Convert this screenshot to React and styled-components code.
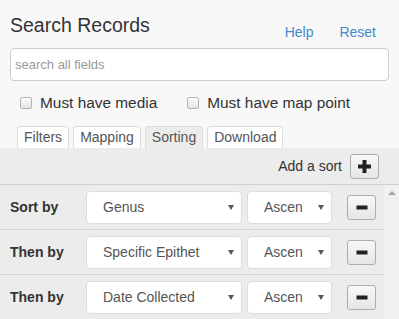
import React from 'react';
import styled, { createGlobalStyle } from 'styled-components';

const GlobalStyle = createGlobalStyle`
  html, body {
    margin: 0;
    overflow: hidden;
    background: #f8f8f8;
    font-family: "Liberation Sans", Arial, sans-serif;
    color: #333;
  }
`;

const SORTS = [
  { label: 'Sort by', field: 'Genus', order: 'Ascen' },
  { label: 'Then by', field: 'Specific Epithet', order: 'Ascen' },
  { label: 'Then by', field: 'Date Collected', order: 'Ascen' },
];

const TABS = ['Filters', 'Mapping', 'Sorting', 'Download'];

const PlusIcon = () => (
  <svg width="13" height="13" viewBox="0 0 13 13">
    <rect x="4.5" y="0" width="4" height="13" fill="#222" />
    <rect x="0" y="4.5" width="13" height="4" fill="#222" />
  </svg>
);

const MinusIcon = () => (
  <svg width="12" height="13" viewBox="0 0 12 13">
    <rect x="0.5" y="4.5" width="11" height="4" fill="#222" />
  </svg>
);

const App = () => {
  return (
    <Page>
      <GlobalStyle />
      <Header>
        <Title>Search Records</Title>
        <Links>
          <NavLink href="#">Help</NavLink>
          <NavLink href="#">Reset</NavLink>
        </Links>
      </Header>
      <SearchWrap>
        <SearchInput placeholder="search all fields" />
      </SearchWrap>
      <Checks>
        <CheckLabel>
          <CheckBox type="checkbox" />
          Must have media
        </CheckLabel>
        <CheckLabel>
          <CheckBox type="checkbox" />
          Must have map point
        </CheckLabel>
      </Checks>
      <Tabs>
        {TABS.map((tab) => (
          <Tab key={tab} active={tab === 'Sorting'}>
            {tab}
          </Tab>
        ))}
      </Tabs>
      <Panel>
        <PanelHeader>
          <span>Add a sort</span>
          <IconButton aria-label="Add a sort">
            <PlusIcon />
          </IconButton>
        </PanelHeader>
        <RowsArea>
          <RowList>
            {SORTS.map((sort, i) => (
              <Row key={i}>
                <RowLabel>{sort.label}</RowLabel>
                <Select width={156}>
                  <SelectText>{sort.field}</SelectText>
                  <Caret />
                </Select>
                <Select width={85}>
                  <SelectText>{sort.order}</SelectText>
                  <Caret />
                </Select>
                <IconButton aria-label="Remove sort">
                  <MinusIcon />
                </IconButton>
              </Row>
            ))}
          </RowList>
          <ScrollTrack>
            <ScrollArrow />
          </ScrollTrack>
        </RowsArea>
      </Panel>
    </Page>
  );
};

const Page = styled.div`
  display: flex;
  flex-direction: column;
`;

const Header = styled.div`
  display: flex;
  justify-content: space-between;
  align-items: flex-start;
  padding: 14px 10px 0;
`;

const Title = styled.h1`
  margin: 0;
  font-size: 19.5px;
  font-weight: normal;
  line-height: 22px;
  color: #333;
`;

const Links = styled.nav`
  display: flex;
  margin-top: 8px;
`;

const NavLink = styled.a`
  padding: 0 13px;
  font-size: 14px;
  line-height: 20px;
  color: #428bca;
  text-decoration: none;
`;

const SearchWrap = styled.div`
  padding: 6px 10px 0;
`;

const SearchInput = styled.input`
  display: block;
  width: 100%;
  height: 33px;
  box-sizing: border-box;
  padding: 0 4px;
  border: 1px solid #ccc;
  border-radius: 4px;
  background: #fff;
  font-family: inherit;
  font-size: 13px;
  color: #555;
  outline: none;

  &::placeholder {
    color: #999;
  }
`;

const Checks = styled.div`
  display: flex;
  gap: 30px;
  padding: 12px 20px 0;
  font-size: 15.4px;
  line-height: 20px;
  color: #333;
`;

const CheckLabel = styled.label`
  display: flex;
  align-items: center;
  gap: 8px;
`;

const CheckBox = styled.input`
  appearance: none;
  margin: 0;
  width: 12px;
  height: 12px;
  box-sizing: border-box;
  border: 1px solid #b4b4b4;
  border-radius: 2px;
  background: linear-gradient(#fcfcfc, #e4e4e4);
`;

const Tabs = styled.div`
  display: flex;
  gap: 4px;
  padding: 13px 0 0 17px;
`;

const Tab = styled.div`
  height: 22px;
  box-sizing: border-box;
  padding: 0 6px;
  border: 1px solid #ddd;
  border-bottom: none;
  border-radius: 4px 4px 0 0;
  background: ${(props) => (props.active ? '#ececec' : '#fff')};
  font-size: 14px;
  line-height: 21px;
  color: #555;
`;

const Panel = styled.div`
  background: #ececec;
`;

const PanelHeader = styled.div`
  display: flex;
  justify-content: flex-end;
  align-items: center;
  gap: 8px;
  height: 36px;
  padding-right: 20px;
  border-bottom: 1px solid #cfcfcf;
  font-size: 14px;
  color: #333;
`;

const IconButton = styled.button`
  display: flex;
  align-items: center;
  justify-content: center;
  flex-shrink: 0;
  width: 29px;
  height: 25px;
  padding: 0;
  border: 1px solid #adadad;
  border-radius: 3px;
  background: linear-gradient(#f8f8f8, #e6e6e6);
`;

const RowsArea = styled.div`
  display: flex;
  height: 200px;
`;

const RowList = styled.div`
  flex: 1;
  min-width: 0;
`;

const ScrollTrack = styled.div`
  display: flex;
  justify-content: center;
  width: 15px;
  flex-shrink: 0;
  background: #f1f1f1;
`;

const ScrollArrow = styled.div`
  margin-top: 6px;
  width: 0;
  height: 0;
  border-left: 4px solid transparent;
  border-right: 4px solid transparent;
  border-bottom: 4px solid #a3a3a3;
`;

const Row = styled.div`
  display: flex;
  align-items: center;
  height: 44px;
  padding: 0 8px 0 10px;
  border-bottom: 1px solid #d3d3d3;

  & > ${IconButton} {
    margin-left: 15px;
  }
`;

const RowLabel = styled.div`
  width: 76px;
  flex-shrink: 0;
  font-size: 14px;
  font-weight: bold;
  color: #333;
`;

const Select = styled.div`
  display: flex;
  align-items: center;
  justify-content: space-between;
  width: ${(props) => props.width}px;
  height: 33px;
  box-sizing: border-box;
  margin-right: 5px;
  padding: 0 7px 0 16px;
  border: 1px solid #ddd;
  border-radius: 4px;
  background: #fff;
  font-size: 14px;
  color: #555;

  &:last-of-type {
    margin-right: 0;
  }
`;

const SelectText = styled.span`
  white-space: nowrap;
  overflow: hidden;
`;

const Caret = styled.span`
  width: 0;
  height: 0;
  border-left: 3px solid transparent;
  border-right: 3px solid transparent;
  border-top: 5px solid #555;
`;

export default App;
